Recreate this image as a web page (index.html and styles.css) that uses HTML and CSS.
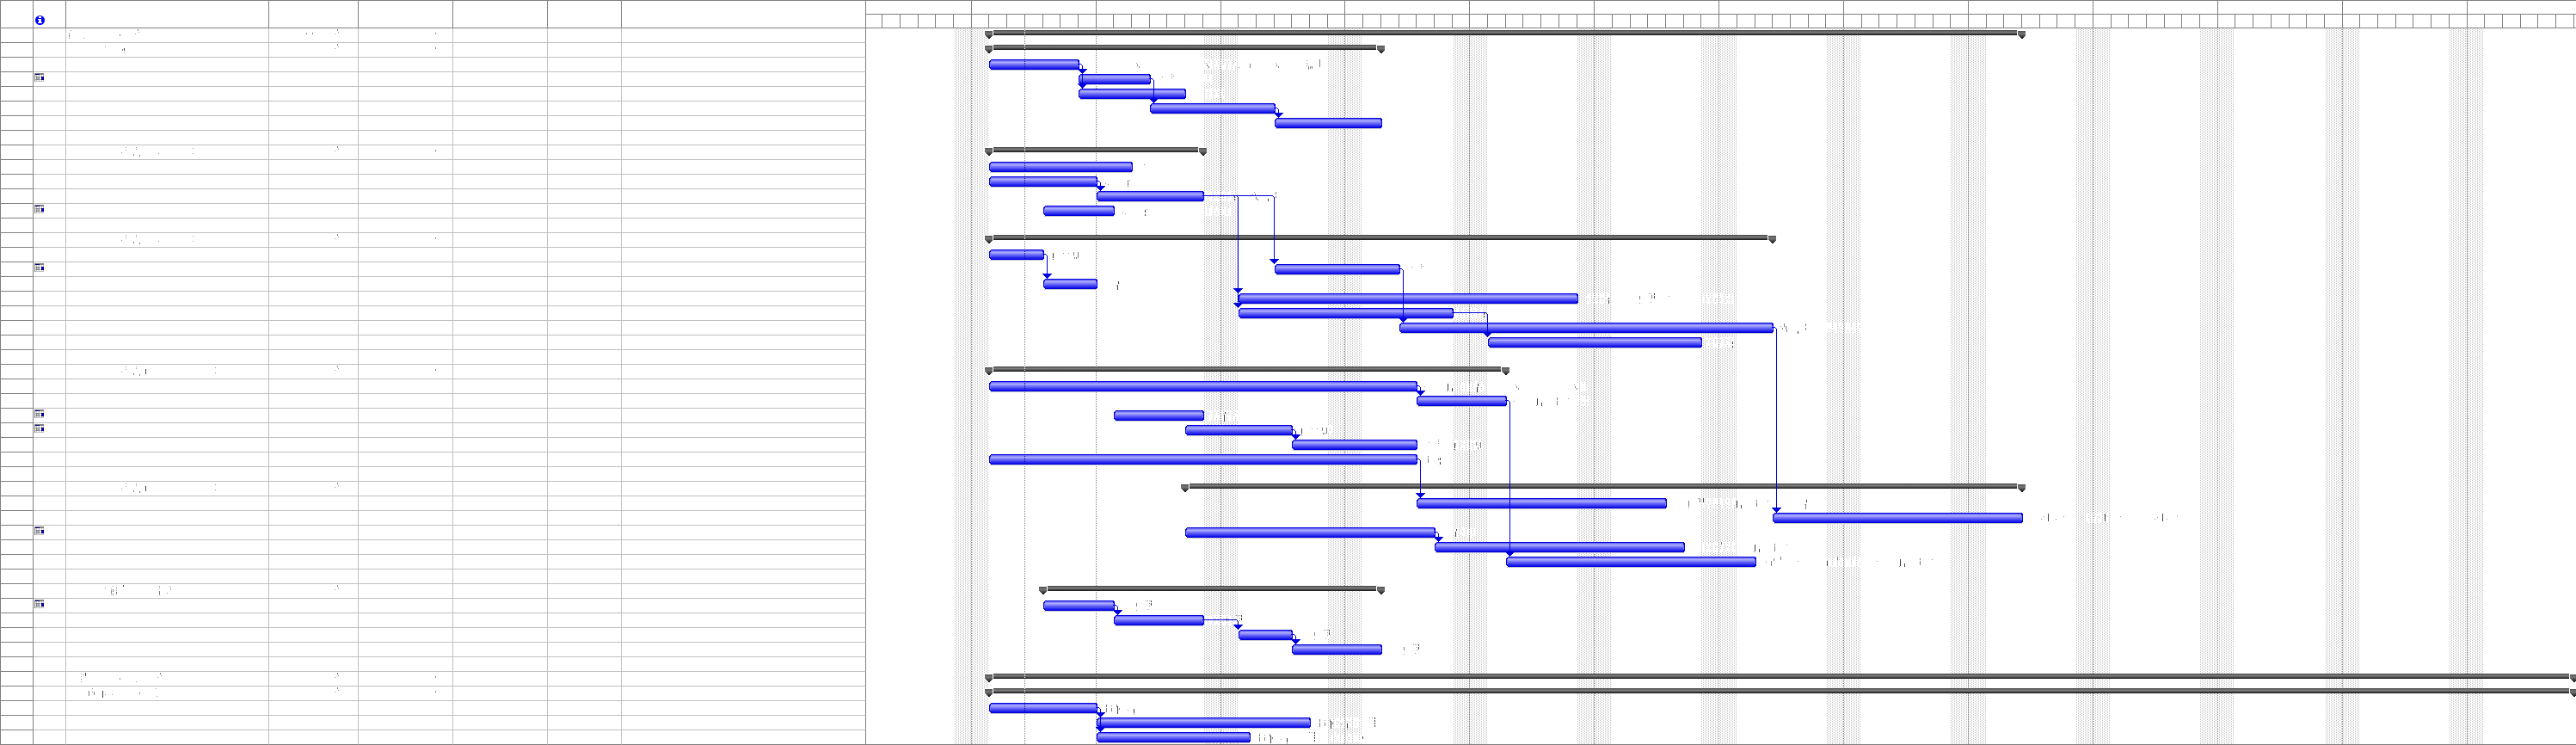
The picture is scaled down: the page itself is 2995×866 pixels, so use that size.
FILE: index.html
```html
<!DOCTYPE html>
<html lang="en">
<head>
<meta charset="utf-8">
<title>Project schedule</title>
<link rel="stylesheet" href="styles.css">
</head>
<body>
<main class="schedule">
  <table class="sheet">
    <colgroup>
      <col class="col-id"><col class="col-info"><col class="col-name"><col class="col-duration">
      <col class="col-date"><col class="col-date"><col class="col-pred"><col class="col-resource">
    </colgroup>
    <thead>
      <tr>
        <th></th>
        <th><svg class="info-icon" width="11" height="11" viewBox="0 0 11 11">
          <ellipse cx="5.5" cy="5.5" rx="5.5" ry="5.5" fill="#0000ff"/>
          <path d="M4 1h3v2H4zM3 4h4v4h1v1H3V8h1V5H3z" fill="#fff" shape-rendering="crispEdges"/>
        </svg></th>
        <th></th><th></th><th></th><th></th><th></th><th></th>
      </tr>
    </thead>
    <tbody id="rows"></tbody>
  </table>
  <section class="timeline">
    <svg id="chart" class="chart" shape-rendering="crispEdges">
      <defs>
        <linearGradient id="task" x1="0" y1="0" x2="0" y2="1">
          <stop offset="0" stop-color="#5c5cf4"/><stop offset="0.25" stop-color="#acacff"/>
          <stop offset="0.5" stop-color="#7070fa"/><stop offset="1" stop-color="#0c0ce8"/>
        </linearGradient>
        <linearGradient id="summary" x1="0" y1="0" x2="0" y2="1">
          <stop offset="0" stop-color="#404040"/><stop offset="0.4" stop-color="#808080"/>
          <stop offset="0.65" stop-color="#555555"/><stop offset="1" stop-color="#101010"/>
        </linearGradient>
        <linearGradient id="cap" x1="0" y1="0" x2="0" y2="1">
          <stop offset="0" stop-color="#505050"/><stop offset="0.35" stop-color="#787878"/>
          <stop offset="1" stop-color="#101010"/>
        </linearGradient>
        <pattern id="weekend" width="4" height="2" patternUnits="userSpaceOnUse">
          <path d="M0 1h1v1H0zM2 0h1v1H2z" fill="#c0c0c0"/>
        </pattern>
        <pattern id="clear" width="11" height="12" patternUnits="userSpaceOnUse">
          <path d="M0 0h2v12H0zM3 3h3v7H3zM5 0h2v5H5zM8 2h2v9H8zM5 9h5v2H5z" fill="#fff"/>
        </pattern>
      </defs>
    </svg>
  </section>
</main>
<script src="gantt.js"></script>
</body>
</html>
```
FILE: styles.css
```css
body {
  margin: 0;
  background: #fff;
  font-family: "Liberation Sans", Arial, sans-serif;
  font-size: 11px;
}

.schedule {
  display: flex;
  align-items: stretch;
}

.sheet {
  flex: none;
  table-layout: fixed;
  width: 1007px;
  border-collapse: separate;
  border-spacing: 0;
  border-left: 1px solid #808080;
  border-top: 1px solid #808080;
}

.col-id, .col-info { width: 38px; }
.col-name { width: 236px; }
.col-duration { width: 104px; }
.col-date { width: 110px; }
.col-pred { width: 86px; }
.col-resource { width: 284px; }

.sheet th,
.sheet td {
  box-sizing: border-box;
  padding: 0;
  line-height: 0;
  text-align: left;
}

.sheet th {
  height: 32px;
  vertical-align: bottom;
  border-right: 1px solid #808080;
  border-bottom: 1px solid #808080;
}

.sheet td {
  height: 17px;
  vertical-align: top;
  border-right: 1px solid #c0c0c0;
  border-bottom: 1px solid #c0c0c0;
}

.sheet td:first-child {
  border-color: #808080;
}

.sheet td:last-child {
  border-right-color: #808080;
}

.sheet tbody tr:last-child td {
  border-bottom-color: #808080;
}

.info-icon {
  display: block;
  margin: 0 0 3px 2px;
}

.calendar-icon {
  display: block;
  margin: 1px 0 0 1px;
}

.marks {
  display: block;
}

.timeline {
  flex: 1;
  min-width: 0;
  display: flex;
}

.chart {
  flex: 1;
  min-width: 0;
  display: block;
}
```
FILE: gantt.js
```js
const ROWS = 49, ROW = 17, HEAD = 33, ORIGIN = 1007;
const BOTTOM = HEAD + ROWS * ROW - 1;
const dayX = d => Math.floor(1129.2 + 20.7 * d);
const rowY = r => HEAD + ROW * r;

// Marks in the sheet: [x, y within row, height, dark]
const flag = [[389, 6], [392, 1, 2], [393, 4]];
const dash = [[506, 5, 2]];
const phase = [[141, 8], [146, 2], [146, 5], [155, 10, 2], [158, 2], [158, 4], [162, 11, 2], [250, 3], [250, 9]];
const stem = [[169, 5, 6, 1]];
const sheetMarks = {
  0: [[80, 5], [80, 7, 3], [80, 11], [82, 2], [97, 11], [139, 7, 2], [157, 6], [160, 1, 2], [161, 4], [356, 5, 2], [363, 5, 2], ...flag, ...dash],
  1: [[122, 4], [142, 7, 2], [144, 6, 3, 1], [144, 10], ...flag, ...dash],
  8: [[141, 8], [146, 2], [146, 5], [155, 10, 2], [158, 2], [158, 4], [162, 11, 2], [184, 9], [224, 3], [224, 9], ...flag, ...dash],
  14: [[141, 8], [146, 2], [146, 5], [155, 10, 2], [158, 2], [158, 4], [162, 11, 2], [184, 9], [224, 3], [224, 9], ...flag, ...dash],
  23: [...phase, ...stem, ...flag, ...dash].filter(m => m[0] !== 0),
  31: [...phase, ...stem, ...flag],
  38: [[122, 4], [129, 5], [129, 7, 4], [129, 12], [131, 2], [131, 6, 3], [131, 11, 2], [135, 3], [135, 5], [135, 7], [135, 9, 3], [143, 1, 2, 1], [185, 2], [185, 4], [185, 8, 5], [194, 10], [197, 2], [198, 4], [198, 6], ...flag],
  44: [[94, 2], [94, 5], [94, 8], [94, 11], [97, 3], [99, 1, 4, 1], [139, 7, 2], [158, 11], [183, 6], [186, 1, 2], [187, 4], ...flag, ...dash],
  45: [[103, 5, 6], [107, 2], [107, 6], [109, 6, 4], [119, 5, 8, 1], [122, 9], [130, 9], [162, 7, 2], [181, 2], [182, 11], ...flag, ...dash]
};
const columns = [[77, 313], [313, 417], [417, 527]];
const dated = [3, 12, 16, 26, 27, 34, 39];

const rect = (x, y, w, h, fill) => `<rect x="${x}" y="${y}" width="${w}" height="${h}" fill="${fill}"/>`;
const mark = (x, y, h = 1, dark = 0) => rect(x, y, 1, h, dark ? '#404040' : h > 1 ? '#808080' : '#949494');

const calendar = '<svg class="calendar-icon" width="11" height="10" viewBox="0 0 11 10" shape-rendering="crispEdges">' +
  '<path d="M1 2h10v8H1z" fill="#fff"/><path d="M2 2h1v8H2zM5 2h1v8H5zM8 2h1v8H8zM10 2h1v8h-1zM1 4h10v1H1zM1 7h10v1H1zM1 9h10v1H1z" fill="#c0c0c0"/>' +
  '<path d="M0 0h11v2H0zM0 2h1v8H0zM2 4h4v4H2z" fill="#808080"/><path d="M3 5h2v2H3z" fill="#c0c0c0"/>' +
  '<path d="M1 1h5v1H1z" fill="#000080"/><path d="M8 4h3v4H8z" fill="#000080"/><path d="M9 5h1v2H9z" fill="#0000ff"/></svg>';

let html = '';
for (let r = 0; r < ROWS; r++) {
  html += '<tr><td></td><td>' + (dated.includes(r) ? calendar : '') + '</td>';
  for (const [from, to] of columns) {
    const inside = (sheetMarks[r] || []).filter(m => m[0] >= from && m[0] < to);
    html += '<td>' + (inside.length
      ? `<svg class="marks" width="${to - from - 1}" height="16" shape-rendering="crispEdges">${inside.map(m => mark(m[0] - from, m[1], m[2], m[3])).join('')}</svg>`
      : '') + '</td>';
  }
  html += '<td></td><td></td><td></td></tr>';
}
document.getElementById('rows').innerHTML = html;

// [row, first day, last day]
const summaries = [[0, 1, 59], [1, 1, 23], [8, 1, 13], [14, 1, 45], [23, 1, 30], [31, 12, 59], [38, 4, 23], [44, 1, 90], [45, 1, 90]];
const tasks = [
  [2, 1, 6], [3, 6, 10], [4, 6, 12], [5, 10, 17], [6, 17, 23],
  [9, 1, 9], [10, 1, 7], [11, 7, 13], [12, 4, 8],
  [15, 1, 4], [16, 17, 24], [17, 4, 7], [18, 15, 34], [19, 15, 27], [20, 24, 45], [21, 29, 41],
  [24, 1, 25], [25, 25, 30], [26, 8, 13], [27, 12, 18], [28, 18, 25], [29, 1, 25],
  [32, 25, 39], [33, 45, 59], [34, 12, 26], [35, 26, 40], [36, 30, 44],
  [39, 4, 8], [40, 8, 13], [41, 15, 18], [42, 18, 23],
  [46, 1, 7], [47, 7, 19], [48, 7, 15.6]
];
const links = [[2, 3], [2, 4], [3, 5], [5, 6], [10, 11], [11, 16], [11, 18], [11, 19], [15, 17], [16, 20], [19, 21],
  [20, 33], [24, 25], [27, 28], [25, 36], [29, 32], [34, 35], [39, 40], [40, 41], [41, 42], [46, 47], [46, 48]];

// Light areas where labels cross the weekend shading: [row, from, to]
const cleared = [[2, 1400, 1438], [3, 1400, 1412], [4, 1402, 1424], [11, 1402, 1436], [12, 1402, 1434],
  [18, 1844, 1876], [18, 1980, 2016], [19, 1692, 1726], [20, 2124, 2164], [21, 1984, 2016],
  [24, 1698, 1728], [24, 1834, 1846], [25, 1834, 1848], [26, 1404, 1440], [27, 1544, 1550], [28, 1692, 1724],
  [32, 1980, 2018], [33, 2426, 2456], [34, 1692, 1716], [35, 1980, 2018], [36, 2126, 2166],
  [40, 1402, 1438], [41, 1544, 1548], [47, 1548, 1582], [48, 1548, 1584]];

// Marks beside the bars, same form as in the sheet
const t = (x, dx = 0) => [[x, 5, 4], [x, 13], [x + 11, 2], [x + 13, 2], [x + 15, 2], [x + 15, 5], [x + 15, 8], [x + 17, 2, 2, 1], [x + 17, 5, 3, 1], [x + 13, 12]];
const tail = x => [[x, 5, 8, 1], [x + 5, 10, 4, 1], [x - 1, 13]];
const slash = x => [[x, 6], [x + 1, 8, 2], [x + 3, 10, 2]];
const ver = x => [[x, 4, 3], [x, 8, 5], [x + 6, 5], [x + 6, 8, 4], [x + 12, 4, 3], [x + 13, 6, 9, 1], [x + 15, 8, 2], [x + 25, 10], [x + 32, 9, 5, 1], [x + 32, 15]];
const chartMarks = {
  2: [...slash(1321), ...slash(1402), [1440, 11], [1453, 7, 5], ...slash(1483), [1519, 3], [1519, 6], [1519, 9], [1521, 10, 4], [1523, 10, 3], [1525, 10, 3], [1534, 2, 9]],
  3: [[1351, 5], [1362, 2], [1362, 4], [1362, 6], [1364, 4]],
  9: [[1330, 5]],
  10: [[1285, 10], [1288, 11], [1311, 7, 2, 1], [1311, 10, 2, 1], [1311, 13, 1, 1], [1313, 6]],
  11: [[1435, 8, 2, 1], [1435, 11, 2, 1], [1454, 6], [1456, 6], [1458, 3], [1459, 5, 3], [1460, 9, 3], [1462, 11, 2], [1474, 11, 3, 1], [1483, 3, 3], [1483, 8, 2]],
  12: [[1305, 10], [1308, 11], [1331, 7, 3, 1], [1331, 12, 2, 1], [1333, 6]],
  15: [[1224, 6, 6, 1], [1224, 13, 1, 1], [1236, 6], [1242, 6], [1248, 5, 4], [1249, 11, 2], [1251, 11, 2], [1253, 5, 7]],
  16: [[1641, 5], [1652, 2], [1652, 4], [1652, 6], [1654, 4]],
  17: [[1297, 10], [1299, 9, 6, 1], [1300, 5, 3, 1]],
  18: [[1870, 7, 2, 1], [1870, 10, 4, 1], [1906, 5, 4], [1906, 13], [1917, 2], [1919, 2], [1920, 4, 4], [1923, 2, 2, 1], [1923, 5, 3, 1], [1919, 12], [1940, 5]],
  19: [[1706, 4], [1708, 6], [1725, 8, 2, 1], [1725, 11, 2, 1]],
  20: [[2070, 6], [2072, 8, 2], [2074, 3, 4], [2076, 6, 4], [2077, 10, 3], [2090, 12, 3, 1], [2099, 3, 3], [2099, 8, 3]],
  21: [[2014, 7, 3, 1], [2014, 12, 2, 1]],
  24: [[1656, 8], ...tail(1683), [1717, 9, 6, 1], [1718, 5, 3, 1], ...slash(1762), ...slash(1830)],
  25: [[1760, 8], ...tail(1787), [1810, 4, 3], [1810, 8, 5], [1823, 5]],
  26: [[1423, 7, 8, 1], [1424, 4, 2, 1]],
  27: [[1513, 6, 6, 1], [1513, 13, 1, 1], [1525, 6], [1531, 6], [1537, 5, 4], [1538, 11, 2], [1540, 11, 2], [1542, 5, 7]],
  28: [[1661, 5], [1672, 2], [1672, 4], [1672, 6], [1691, 6, 6, 1], [1691, 13, 1, 1], [1716, 5, 4], [1718, 11, 2], [1721, 5, 7]],
  29: [[1660, 4, 2], [1660, 7, 5], [1672, 7, 2], [1674, 6, 3, 1], [1674, 11, 3, 1]],
  32: [[1963, 5, 7], [1963, 13], [1974, 2], [1976, 2, 5], [1980, 2, 5, 1], ...tail(2019), [2042, 4, 2], [2042, 7, 5], [2055, 5], [2100, 4, 3, 1], [2098, 9], [2099, 9, 6]],
  33: [[2373, 9], [2376, 6], [2381, 3, 9, 1], [2390, 9], [2399, 6], [2447, 3, 9, 1], [2465, 6], [2505, 9], [2508, 7], [2514, 3, 9, 1], [2519, 9], [2531, 6]],
  34: [[1692, 7, 6, 1], [1693, 4, 2, 1]],
  35: [[2001, 2, 3], ...tail(2040), [2063, 4, 2], [2063, 7, 6], [2077, 5]],
  36: [[2053, 8], [2059, 7, 6], [2062, 4, 3], [2070, 2, 4], [2090, 7], [2124, 7, 6, 1], [2136, 2, 4], [2182, 7], ...tail(2209), [2232, 4, 2], [2232, 7, 5], [2246, 5]],
  39: t(1321), 40: t(1426), 41: t(1528), 42: t(1632),
  46: ver(1286),
  47: [...ver(1534), ...[2, 5, 8, 11].map(y => [1598, y, 2, 1]), [1592, 2], [1595, 2]],
  48: [...ver(1464), ...[2, 5, 8, 11].map(y => [1528, y, 2, 1]), [1522, 2], [1525, 2], [1584, 7, 3, 1]]
};

let out = '';
const dots = (x, y1, y2, fill) => `<path d="M${x + .5} ${y1}V${y2}" stroke="${fill}" stroke-dasharray="1 1" fill="none"/>`;

for (let d = 13; d < 90; d += 7) {
  const x = dayX(d) + 1;
  out += rect(x, HEAD, dayX(d + 2) - x, BOTTOM - HEAD, 'url(#weekend)');
}
out += rect(1110, HEAD, 39, BOTTOM - HEAD, 'url(#weekend)');
for (const [r, a, b] of cleared) out += rect(a, rowY(r) + 2, b - a, 12, 'url(#clear)');
for (let d = 0; d < 90; d += 7) out += dots(dayX(d), HEAD + 1, BOTTOM, '#808080');
out += dots(dayX(3), HEAD + 1, BOTTOM, '#808080');

// Two-tier date scale
const width = 4000;
for (const y of [0, 16, 32, BOTTOM]) out += rect(ORIGIN, y, width, 1, '#808080');
for (let d = -5; d <= 130; d++) out += rect(dayX(d), d % 7 ? 16 : 0, 1, d % 7 ? 16 : 32, '#808080');

for (const [r, a, b] of summaries) {
  const y = rowY(r) + 2, x1 = dayX(a), x2 = dayX(b);
  out += rect(x1 - 5, y, 11, 7, '#fff') + rect(x2 - 5, y, 11, 7, '#fff');
  out += rect(x1 + 6, y, x2 - x1 - 11, 6, 'url(#summary)');
  for (const x of [x1, x2]) out += `<path d="M${x - 4} ${y + 1}h9v5l-4 4h-1l-4 -4z" fill="url(#cap)"/>`;
  if (a < 3) out += dots(dayX(3), y, y + 6, '#fff');
}

const byRow = {};
for (const [r, a, b] of tasks) {
  byRow[r] = [a, b];
  const y = rowY(r) + 2, x = dayX(a) + 1, w = dayX(b) + 2 - x;
  out += rect(x + 1, y + 12, w - 2, 1, '#c8c8d0');
  out += `<path d="M${x + 2} ${y}h${w - 4}l2 2v8l-2 2h${4 - w}l-2 -2v-8z" fill="#0000dc"/>`;
  out += rect(x + 2, y + 1, w - 4, 10, 'url(#task)') + rect(x + 1, y + 3, 1, 6, '#7474f8') + rect(x + w - 2, y + 3, 1, 6, '#7474f8');
  if (a < 3) out += dots(dayX(3), y, y + 12, '#000090');
}

for (const r in chartMarks) out += chartMarks[r].map(m => mark(m[0], rowY(+r) + m[1], m[2], m[3])).join('');

for (const [from, to] of links) {
  const end = byRow[from][1], start = byRow[to][0];
  const x = dayX(start) + (end === start ? 5 : 0), y = rowY(from) + 7, bottom = rowY(to) + 2, left = dayX(end);
  out += rect(left, y, x - left - 1, 1, '#0000dc') + rect(x - 1, y + 1, 1, 1, '#0000dc') + rect(x, y + 2, 1, bottom - y - 4, '#0000dc');
  out += `<path d="M${x - 5} ${bottom - 6}h11l-5 6h-1z" fill="#0000dc"/>`;
}

document.getElementById('chart').insertAdjacentHTML('beforeend', `<g transform="translate(${-ORIGIN} 0)">${out}</g>`);
```
